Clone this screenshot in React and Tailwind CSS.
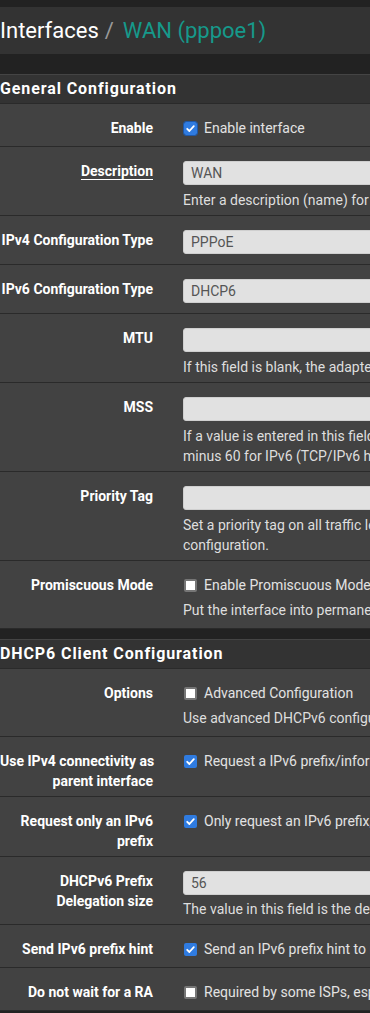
import React from "react";

function Check({ checked, focus }) {
  if (checked) {
    return (
      <span className={"inline-flex shrink-0 w-[13px] h-[13px] ml-[1px] mr-[7px] items-center justify-center rounded-[2px] bg-[#2f7be0] " + (focus ? "outline outline-[1.5px] outline-[#1f58a8]" : "")}>
        <svg width="11" height="11" viewBox="0 0 11 11">
          <path d="M2.2 5.8 L4.4 8 L8.8 3.2" fill="none" stroke="#ffffff" strokeWidth="1.8" strokeLinecap="round" strokeLinejoin="round" />
        </svg>
      </span>
    );
  }
  return <span className="inline-block shrink-0 w-[13px] h-[13px] ml-[1px] mr-[7px] rounded-[2px] bg-white border-2 border-[#767676]" />;
}

function Input({ value }) {
  return (
    <div className="h-[24px] w-full rounded-[3px] bg-[#e1e1e1] border border-[#cfcfcf] flex items-center pl-[7px] text-[14px] text-[#555555]">
      {value}
    </div>
  );
}

function Help({ lines, mt = "mt-[5px]" }) {
  return (
    <div className={mt + " text-[14px] leading-[20px] text-[#dedede]"}>
      {lines.map((l, i) => (
        <div key={i} className="whitespace-nowrap">{l}</div>
      ))}
    </div>
  );
}

function Row({ label, underline, children, pb }) {
  return (
    <div className={"flex items-start bg-[#424242] border-b border-[#2a2a2a] pt-[14px] " + pb}>
      <div className="w-[168px] shrink-0 pr-[15px] text-right text-[14px] leading-[20px] font-bold text-white whitespace-nowrap">
        {label.map((l, i) => (
          <div key={i}>
            {underline ? <span className="underline underline-offset-[3px]">{l}</span> : l}
          </div>
        ))}
      </div>
      <div className="flex-1 pl-[15px]">{children}</div>
    </div>
  );
}

function CheckLine({ checked, focus, text }) {
  return (
    <div className="flex items-center h-[20px] text-[14px] text-[#e2e2e2] whitespace-nowrap">
      <Check checked={checked} focus={focus} />
      <span>{text}</span>
    </div>
  );
}

function Heading({ title }) {
  return (
    <div className="h-[30px] bg-[#333333] border-t border-[#444444] border-b border-b-[#2a2a2a] flex items-center">
      <h2 className="text-[16px] font-bold tracking-[0.9px] text-white whitespace-nowrap">{title}</h2>
    </div>
  );
}

export default function App() {
  return (
    <div className="w-[370px] h-[1013px] overflow-hidden bg-[#222222] font-['Roboto',sans-serif]">
      <div className="w-[1100px] pt-[7px]">
        <div className="h-[47px] bg-[#333333] flex items-center text-[22px] whitespace-nowrap">
          <span className="text-white">Interfaces</span>
          <span className="text-[#9a9a9a] px-[6px]">/</span>
          <span className="text-[#16998b] pl-[3px]">WAN (pppoe1)</span>
        </div>

        <div className="mt-[20px]">
          <Heading title="General Configuration" />
          <Row label={["Enable"]} pb="pb-[8px]">
            <CheckLine checked focus text="Enable interface" />
          </Row>
          <Row label={["Description"]} underline pb="pb-[5px]">
            <Input value="WAN" />
            <Help lines={["Enter a description (name) for the interface here."]} />
          </Row>
          <Row label={["IPv4 Configuration Type"]} pb="pb-[10px]">
            <Input value="PPPoE" />
          </Row>
          <Row label={["IPv6 Configuration Type"]} pb="pb-[10px]">
            <Input value="DHCP6" />
          </Row>
          <Row label={["MTU"]} pb="pb-[5px]">
            <Input value="" />
            <Help lines={["If this field is blank, the adapter's default MTU will be used. This is typically 1500 bytes but can vary in some circumstances."]} />
          </Row>
          <Row label={["MSS"]} pb="pb-[5px]">
            <Input value="" />
            <Help
              lines={[
                "If a value is entered in this field, then MSS clamping for TCP connections to the value entered above minus 40 for IPv4 (TCP/IPv4 header size) and",
                "minus 60 for IPv6 (TCP/IPv6 header size) will be in effect.",
              ]}
            />
          </Row>
          <Row label={["Priority Tag"]} pb="pb-[5px]">
            <Input value="" />
            <Help
              lines={[
                "Set a priority tag on all traffic leaving this interface. This requires VLAN priority support in the network hardware and switch",
                "configuration.",
              ]}
            />
          </Row>
          <Row label={["Promiscuous Mode"]} pb="pb-[8px]">
            <CheckLine checked={false} text="Enable Promiscuous Mode" />
            <Help lines={["Put the interface into permanently promiscuous mode. Only for interfaces not used by VLANs. Before using this option, read the documentation."]} />
          </Row>
        </div>

        <div className="mt-[10px]">
          <Heading title="DHCP6 Client Configuration" />
          <Row label={["Options"]} pb="pb-[8px]">
            <CheckLine checked={false} text="Advanced Configuration" />
            <Help lines={["Use advanced DHCPv6 configuration options."]} />
          </Row>
          <Row label={["Use IPv4 connectivity as", "parent interface"]} pb="pb-[5px]">
            <CheckLine checked text="Request a IPv6 prefix/information through the IPv4 connectivity link" />
          </Row>
          <Row label={["Request only an IPv6", "prefix"]} pb="pb-[5px]">
            <CheckLine checked text="Only request an IPv6 prefix, do not request an IPv6 address" />
          </Row>
          <Row label={["DHCPv6 Prefix", "Delegation size"]} pb="pb-[5px]">
            <Input value="56" />
            <Help mt="mt-[4px]" lines={["The value in this field is the delegated prefix length provided by the DHCPv6 server. Normally specified by the ISP."]} />
          </Row>
          <Row label={["Send IPv6 prefix hint"]} pb="pb-[8px]">
            <CheckLine checked text="Send an IPv6 prefix hint to indicate the desired prefix size for delegation" />
          </Row>
          <Row label={["Do not wait for a RA"]} pb="pb-[8px]">
            <CheckLine checked={false} text="Required by some ISPs, especially those not using PPPoE" />
          </Row>
        </div>
      </div>
    </div>
  );
}
